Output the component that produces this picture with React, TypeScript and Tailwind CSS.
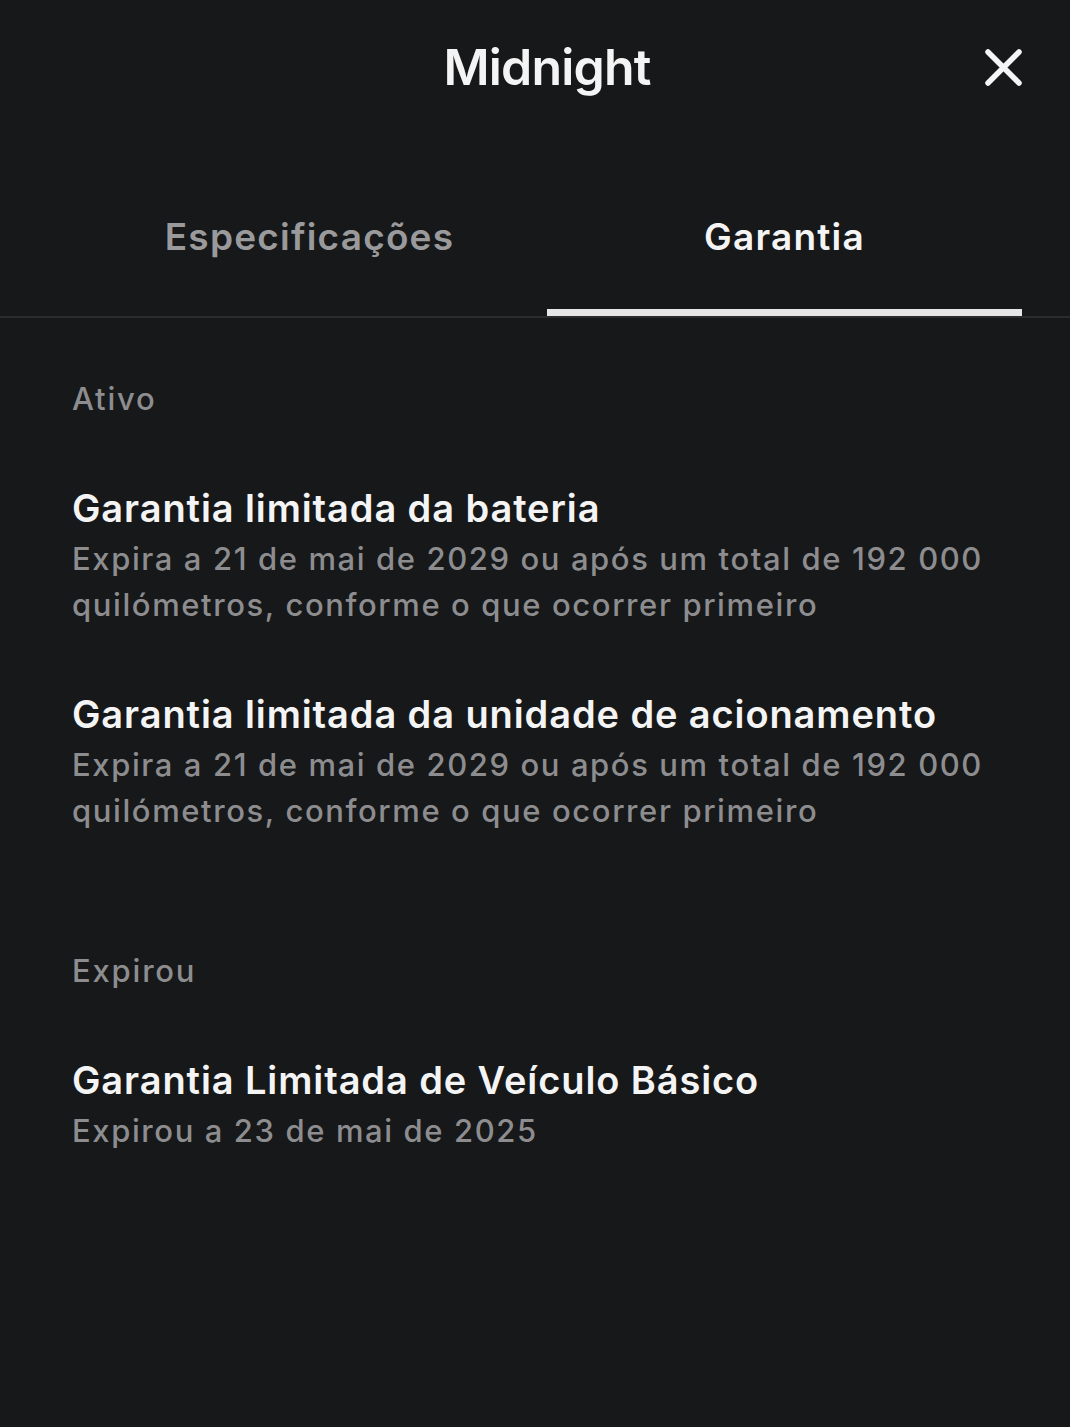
import React, { useState } from 'react';

type Warranty = { title: string; detail: string };

const active: Warranty[] = [
  {
    title: 'Garantia limitada da bateria',
    detail: 'Expira a 21 de mai de 2029 ou após um total de 192 000 quilómetros, conforme o que ocorrer primeiro',
  },
  {
    title: 'Garantia limitada da unidade de acionamento',
    detail: 'Expira a 21 de mai de 2029 ou após um total de 192 000 quilómetros, conforme o que ocorrer primeiro',
  },
];

const expired: Warranty[] = [
  { title: 'Garantia Limitada de Veículo Básico', detail: 'Expirou a 23 de mai de 2025' },
];

function CloseIcon() {
  return (
    <svg width="37" height="37" viewBox="0 0 37 37" fill="none">
      <path d="M3 3L34 34M34 3L3 34" stroke="#f5f5f5" strokeWidth="5.5" strokeLinecap="round" />
    </svg>
  );
}

function WarrantyItem({ item }: { item: Warranty }) {
  return (
    <div className="flex flex-col gap-[4px]">
      <div className="text-[38px] leading-[48px] font-semibold tracking-[0.9px] text-[#f4f4f4]">{item.title}</div>
      <div className="text-[31px] leading-[46px] font-medium tracking-[1.6px] text-[#8d8d8f]">{item.detail}</div>
    </div>
  );
}

export default function App() {
  const [tab, setTab] = useState('Garantia');
  const tabs = ['Especificações', 'Garantia'];

  return (
    <div
      className="min-h-[1427px] w-full bg-[#17181a] text-white"
      style={{ fontFamily: 'Inter, "Noto Sans", sans-serif' }}
    >
      {/* Header */}
      <div className="h-[134px] flex items-center pl-[72px] pr-[48px]">
        <div className="w-[37px]" />
        <div className="flex-1 text-center text-[50px] font-semibold tracking-[-0.8px] text-[#f4f4f4]">Midnight</div>
        <button className="w-[37px] h-[37px] flex items-center justify-center">
          <CloseIcon />
        </button>
      </div>

      {/* Tabs */}
      <div className="border-b-2 border-[#2b2c2e]">
        <div className="flex pl-[72px] pr-[48px]">
          {tabs.map((t) => (
            <button
              key={t}
              onClick={() => setTab(t)}
              className={`flex-1 h-[182px] pt-[79px] flex justify-center items-start border-b-[7px] ${
                tab === t ? 'border-[#e6e6e6] text-[#f4f4f4]' : 'border-transparent text-[#9a9a9c]'
              }`}
            >
              <span className="text-[37px] leading-[48px] font-semibold tracking-[1.2px]">{t}</span>
            </button>
          ))}
        </div>
      </div>

      {/* Content */}
      <div className="pl-[72px] pr-[48px] pt-[61px]">
        <div className="text-[31px] leading-[40px] font-medium tracking-[1.8px] text-[#8d8d8f]">Ativo</div>
        <div className="mt-[65px] flex flex-col gap-[62px]">
          {active.map((w) => (
            <WarrantyItem key={w.title} item={w} />
          ))}
        </div>

        <div className="mt-[117px] text-[31px] leading-[40px] font-medium tracking-[1.8px] text-[#8d8d8f]">Expirou</div>
        <div className="mt-[65px] flex flex-col gap-[62px]">
          {expired.map((w) => (
            <WarrantyItem key={w.title} item={w} />
          ))}
        </div>
      </div>
    </div>
  );
}
